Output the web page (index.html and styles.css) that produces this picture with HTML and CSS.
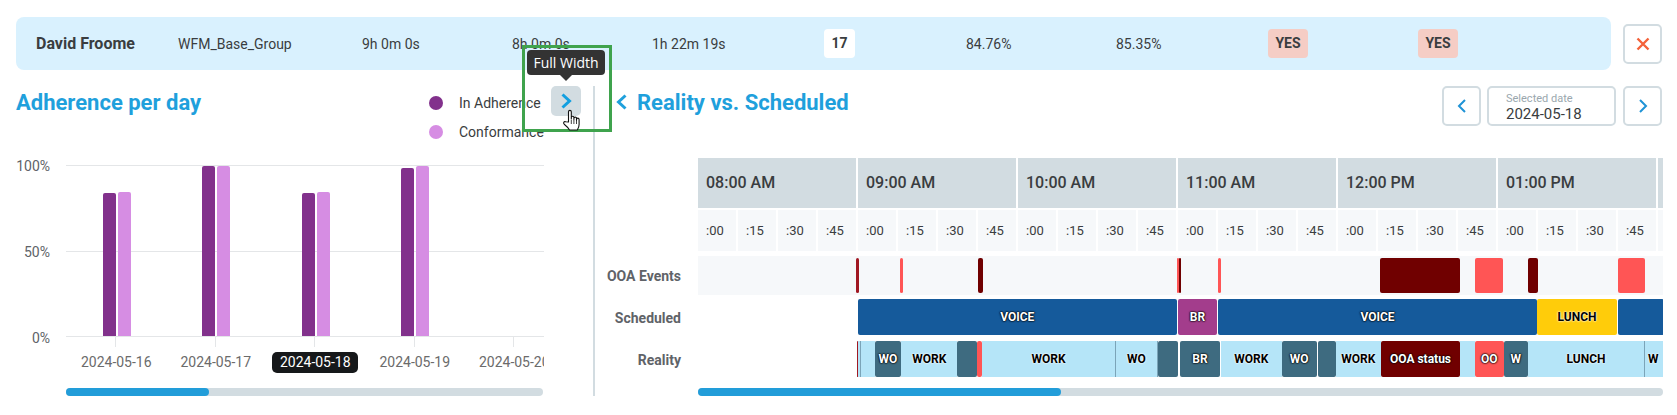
FILE: index.html
```html
<!DOCTYPE html>
<html lang="en">
<head>
  <meta charset="UTF-8">
  <meta name="viewport" content="width=device-width, initial-scale=1.0">
  <title>Adherence</title>
  <link rel="stylesheet" href="styles.css">
</head>
<body>
<div class="page">

  <!-- agent summary -->
  <div class="top-row">
    <div class="agent-bar">
      <div class="agent-name">David Froome</div>
      <div>WFM_Base_Group</div>
      <div>9h 0m 0s</div>
      <div>8h 0m 0s</div>
      <div>1h 22m 19s</div>
      <div><span class="badge badge-white">17</span></div>
      <div>84.76%</div>
      <div>85.35%</div>
      <div><span class="badge badge-red">YES</span></div>
      <div><span class="badge badge-red">YES</span></div>
    </div>
    <button class="icon-btn close-btn">
      <svg width="14" height="14" viewBox="0 0 14 14"><path d="M1.500 1.500l11 11M12.500 1.500l-11 11" stroke="#f4623a" stroke-width="2.400" fill="none"/></svg>
    </button>
  </div>

  <div class="panels">

    <!-- left: chart -->
    <div class="left-panel">
      <div class="left-head">
        <h2 class="title">Adherence per day</h2>
        <div class="legend">
          <div class="legend-row"><span class="dot dot-adh"></span>In Adherence</div>
          <div class="legend-row"><span class="dot dot-conf"></span>Conformance</div>
        </div>
        <button class="expand-btn">
          <svg width="13" height="16" viewBox="0 0 13 16"><path d="M2.500 1.500L9.500 8l-7 6.500" stroke="#129fe0" stroke-width="3" fill="none"/></svg>
        </button>
      </div>

      <div class="chart">
        <div class="y-axis">
          <span>100%</span>
          <span>50%</span>
          <span>0%</span>
        </div>
        <div class="plot-wrap">
          <div class="plot">
            <div class="bars">
              <div class="bar-group">
                <div class="bar bar-adh" style="height:84.3%"></div>
                <div class="bar bar-conf" style="height:84.9%"></div>
              </div>
              <div class="bar-group">
                <div class="bar bar-adh" style="height:100%"></div>
                <div class="bar bar-conf" style="height:100%"></div>
              </div>
              <div class="bar-group">
                <div class="bar bar-adh" style="height:84.3%"></div>
                <div class="bar bar-conf" style="height:84.9%"></div>
              </div>
              <div class="bar-group">
                <div class="bar bar-adh" style="height:98.8%"></div>
                <div class="bar bar-conf" style="height:100%"></div>
              </div>
              <div class="bar-group"></div>
            </div>
            <div class="x-labels">
              <div class="x-label"><span>2024-05-16</span></div>
              <div class="x-label"><span>2024-05-17</span></div>
              <div class="x-label"><span class="selected">2024-05-18</span></div>
              <div class="x-label"><span>2024-05-19</span></div>
              <div class="x-label"><span>2024-05-20</span></div>
            </div>
          </div>
          <div class="scroll scroll-left"><div class="thumb"></div></div>
        </div>
      </div>
    </div>

    <!-- right: timeline -->
    <div class="right-panel">
      <div class="right-head">
        <svg class="back-icon" width="11" height="16" viewBox="0 0 11 16"><path d="M9.500 1.500L2.500 8l7 6.500" stroke="#1fa0dc" stroke-width="3" fill="none"/></svg>
        <h2 class="title">Reality vs. Scheduled</h2>
        <div class="date-nav">
          <button class="icon-btn">
            <svg width="10" height="14" viewBox="0 0 10 14"><path d="M8 1L2 7l6 6" stroke="#1f93d6" stroke-width="2" fill="none"/></svg>
          </button>
          <div class="date-box">
            <div class="date-caption">Selected date</div>
            <div class="date-value">2024-05-18</div>
          </div>
          <button class="icon-btn">
            <svg width="10" height="14" viewBox="0 0 10 14"><path d="M2 1l6 6-6 6" stroke="#1f93d6" stroke-width="2" fill="none"/></svg>
          </button>
        </div>
      </div>

      <div class="timeline">
        <div class="row row-hours">
          <div class="row-label"></div>
          <div class="track hours">
            <div class="hour">08:00 AM</div>
            <div class="hour">09:00 AM</div>
            <div class="hour">10:00 AM</div>
            <div class="hour">11:00 AM</div>
            <div class="hour">12:00 PM</div>
            <div class="hour">01:00 PM</div>
            <div class="hour"></div>
          </div>
        </div>

        <div class="row row-mins">
          <div class="row-label"></div>
          <div class="track mins">
            <div>:00</div><div>:15</div><div>:30</div><div>:45</div>
            <div>:00</div><div>:15</div><div>:30</div><div>:45</div>
            <div>:00</div><div>:15</div><div>:30</div><div>:45</div>
            <div>:00</div><div>:15</div><div>:30</div><div>:45</div>
            <div>:00</div><div>:15</div><div>:30</div><div>:45</div>
            <div>:00</div><div>:15</div><div>:30</div><div>:45</div>
            <div></div>
          </div>
        </div>

        <div class="row row-ooa">
          <div class="row-label">OOA Events</div>
          <div class="track events">
            <div class="seg c-mid" style="left:158.4px;width:2.2px"></div>
            <div class="seg c-red" style="left:202.400px;width:3px"></div>
            <div class="seg c-ooa" style="left:279.5px;width:5px"></div>
            <div class="seg c-red" style="left:478.6px;width:2.4px"></div>
            <div class="seg c-ooa" style="left:480.6px;width:2.2px"></div>
            <div class="seg c-red" style="left:519.7px;width:3.8px"></div>
            <div class="seg c-ooa" style="left:682.4px;width:79.8px"></div>
            <div class="seg c-red" style="left:777.3px;width:28px"></div>
            <div class="seg c-ooa" style="left:830.4px;width:9.2px"></div>
            <div class="seg c-red" style="left:919.7px;width:27.8px"></div>
          </div>
        </div>

        <div class="row row-sched">
          <div class="row-label">Scheduled</div>
          <div class="track">
            <div class="seg c-voice" style="left:159.5px;width:319.5px">VOICE</div>
            <div class="seg c-br" style="left:479.7px;width:39.7px">BR</div>
            <div class="seg c-voice" style="left:520px;width:319px">VOICE</div>
            <div class="seg c-lunch" style="left:839px;width:80px">LUNCH</div>
            <div class="seg c-voice" style="left:919.7px;width:46px"></div>
          </div>
        </div>

        <div class="row row-real">
          <div class="row-label">Reality</div>
          <div class="track">
            <div class="seg c-mid" style="left:158.6px;width:1.6px"></div>
            <div class="seg c-work split" style="left:160.2px;width:2.6px"></div>
            <div class="seg c-work" style="left:162.8px;width:14px"></div>
            <div class="seg c-dark" style="left:176.7px;width:26.6px">WO</div>
            <div class="seg c-work" style="left:203.3px;width:56px">WORK</div>
            <div class="seg c-dark" style="left:259.3px;width:20px"></div>
            <div class="seg c-red" style="left:279.3px;width:4.7px"></div>
            <div class="seg c-work split" style="left:284px;width:134px">WORK</div>
            <div class="seg c-work split" style="left:418px;width:41.7px">WO</div>
            <div class="seg c-dark" style="left:459.7px;width:20.6px"></div>
            <div class="seg c-dark" style="left:481.7px;width:40.6px">BR</div>
            <div class="seg c-work" style="left:523px;width:60.7px">WORK</div>
            <div class="seg c-dark" style="left:583.7px;width:35px">WO</div>
            <div class="seg c-dark" style="left:620px;width:18px"></div>
            <div class="seg c-work" style="left:638px;width:44.7px">WORK</div>
            <div class="seg c-ooa" style="left:682.7px;width:79.6px">OOA status</div>
            <div class="seg c-work" style="left:762px;width:15px"></div>
            <div class="seg c-red" style="left:777px;width:28.7px">OO</div>
            <div class="seg c-dark" style="left:805.7px;width:24.3px">W</div>
            <div class="seg c-work split" style="left:830px;width:117px">LUNCH</div>
            <div class="seg c-work clip" style="left:947px;width:18px">W</div>
          </div>
        </div>

        <div class="row row-scroll">
          <div class="row-label"></div>
          <div class="scroll scroll-right"><div class="thumb"></div></div>
        </div>
      </div>
    </div>
  </div>

  <!-- annotation on top of the screenshot -->
  <div class="tooltip">Full Width</div>
  <div class="callout"></div>
  <svg class="hand" width="20" height="22" viewBox="0 0 20 22">
    <path d="M6.500 13V2.800a1.400 1.400 0 0 1 2.800 0V10V8.600a1.300 1.300 0 0 1 2.600 0V10.600V9.400a1.300 1.300 0 0 1 2.600 0V11.200V10.400a1.300 1.300 0 0 1 2.600 0V15.500c0 2.500-.8 4-1.800 5.500H7.500C6.400 19 4.200 16.800 2.200 15.200c-1.300-1.200-.3-3 1.500-2.400z" fill="#fff" stroke="#111" stroke-width="1.100" stroke-linejoin="round"/>
    <path d="M9.300 11v4M11.900 11v4M14.500 11v4" stroke="#111" stroke-width=".8"/>
  </svg>
</div>
</body>
</html>
```

FILE: styles.css
```css
* {
  box-sizing: border-box;
}

body {
  margin: 0;
  background: #fff;
  font-family: Roboto, "Liberation Sans", sans-serif;
  font-size: 14px;
  color: #3a3d40;
  overflow: hidden;
}

.page {
  position: relative;
  width: 1677px;
  height: 415px;
  padding: 17px 15px 0 16px;
}

h2 {
  margin: 0;
}

button {
  padding: 0;
  font: inherit;
  background: #fff;
  cursor: pointer;
}

/* top summary row */
.top-row {
  display: flex;
  align-items: center;
  justify-content: space-between;
  height: 53px;
  margin-bottom: 16px;
}

.agent-bar {
  display: grid;
  grid-template-columns: 142px 184px 150px 140px 172px 142px 150px 152px 150px 1fr;
  align-items: center;
  width: 1595px;
  height: 53px;
  padding-left: 20px;
  background: #d9f1fe;
  border-radius: 8px;
}

.agent-name {
  font-size: 16px;
  font-weight: 700;
}

.badge {
  display: inline-block;
  height: 29px;
  line-height: 29px;
  text-align: center;
  border-radius: 4px;
  font-weight: 700;
}

.badge-white {
  width: 31px;
  background: #fff;
}

.badge-red {
  width: 40px;
  background: #f5cdc5;
}

.icon-btn {
  display: flex;
  align-items: center;
  justify-content: center;
  width: 39px;
  height: 40px;
  border: 2px solid #d2dce1;
  border-radius: 5px;
}

/* panels */
.panels {
  display: flex;
}

.title {
  padding-top: 1px;
  font-size: 22px;
  font-weight: 700;
  line-height: 32px;
  color: #1fa0dc;
}

.left-panel {
  width: 579px;
  height: 310px;
  padding-right: 12px;
  border-right: 2px solid #d2dce1;
}

.left-head {
  display: flex;
  height: 56px;
}

.legend {
  margin-left: auto;
  width: 122px;
  padding-top: 7px;
}

.legend-row {
  display: flex;
  align-items: center;
  gap: 16px;
  height: 20px;
  margin-bottom: 9px;
  white-space: nowrap;
}

.dot {
  width: 14px;
  height: 14px;
  border-radius: 50%;
}

.dot-adh,
.bar-adh {
  background: #82318c;
}

.dot-conf,
.bar-conf {
  background: #d68de3;
}

.expand-btn {
  display: flex;
  align-items: center;
  justify-content: center;
  width: 30px;
  height: 30px;
  border: none;
  border-radius: 5px;
  background: #d2dce1;
}

/* bar chart */
.chart {
  display: flex;
  margin-top: 16px;
}

.y-axis {
  display: flex;
  flex-direction: column;
  justify-content: space-between;
  align-items: flex-end;
  width: 34px;
  height: 188px;
  margin-right: 16px;
  line-height: 16px;
  color: #5e6368;
}

.plot-wrap {
  width: 478px;
  padding-top: 7px;
}

.plot {
  overflow: hidden;
}

.bars {
  display: flex;
  height: 172px;
  border-top: 1px solid #e4e6e8;
  border-bottom: 1px solid #e4e6e8;
  background: linear-gradient(#e4e6e8, #e4e6e8) 0 85px / 100% 1px no-repeat;
}

.bar-group {
  display: flex;
  flex: 0 0 99.5px;
  align-items: flex-end;
  justify-content: center;
  gap: 2px;
  padding-left: 2px;
}

.bar {
  width: 13px;
  border-radius: 2px 2px 0 0;
}

.x-labels {
  display: flex;
  height: 37px;
  padding-top: 15px;
}

.x-label {
  flex: 0 0 99.5px;
  margin-top: -15px;
  padding: 15px 0 0 1px;
  text-align: center;
  white-space: nowrap;
  line-height: 21px;
  color: #6b6b6b;
  background: linear-gradient(#e4e6e8, #e4e6e8) center top / 1px 10px no-repeat;
}

.x-label span {
  display: inline-block;
  padding: 0 7.5px;
}

.x-label .selected {
  background: #16181a;
  color: #fff;
  border-radius: 5px;
}

.scroll {
  height: 8px;
  background: #d2dce1;
  border-radius: 4px;
}

.thumb {
  height: 8px;
  background: #229dd9;
  border-radius: 4px;
}

.scroll-left {
  width: 477px;
  margin-top: 14px;
}

.scroll-left .thumb {
  width: 143px;
}

/* timeline */
.right-panel {
  flex: 1;
  min-width: 0;
}

.right-head {
  display: flex;
  align-items: flex-start;
  height: 40px;
  padding-left: 21px;
}

.back-icon {
  margin: 8px 10px 0 0;
}

.date-nav {
  display: flex;
  gap: 6px;
  margin-left: auto;
}

.date-box {
  width: 129px;
  height: 40px;
  margin-right: 1px;
  padding: 4px 0 0 17px;
  border: 2px solid #d2dce1;
  border-radius: 5px;
}

.date-caption {
  font-size: 11px;
  line-height: 13px;
  color: #9aa7ae;
}

.date-value {
  font-size: 15px;
  line-height: 18px;
}

.timeline {
  margin-top: 32px;
  margin-right: -1px;
}

.row {
  display: flex;
}

.row-label {
  flex: 0 0 86px;
  margin-right: 17px;
  text-align: right;
  font-weight: 700;
  color: #5f6368;
}

.track {
  position: relative;
  width: 965px;
  height: 100%;
  overflow: hidden;
}

.row-hours {
  height: 50px;
  margin-bottom: 2px;
}

.hours {
  display: flex;
  gap: 2px;
}

.hour {
  flex: 0 0 158px;
  padding-left: 8px;
  line-height: 50px;
  font-size: 16px;
  font-weight: 500;
  background: #d2dce1;
}

.row-mins {
  height: 41px;
  margin-bottom: 5px;
}

.mins {
  display: flex;
  gap: 2px;
}

.mins div {
  flex: 0 0 38px;
  padding-left: 8px;
  line-height: 41px;
  font-size: 13px;
  background: #f6f8fa;
}

.row-ooa {
  height: 39px;
  margin-bottom: 4px;
  line-height: 40px;
}

.events {
  background: #f6f8fa;
}

.events .seg {
  top: 2px;
  bottom: 2px;
}

.row-sched {
  height: 36px;
  margin-bottom: 6px;
  line-height: 38px;
}

.row-real {
  height: 36px;
  margin-bottom: 11px;
  line-height: 38px;
}

.seg {
  position: absolute;
  top: 0;
  bottom: 0;
  overflow: hidden;
  text-align: center;
  white-space: nowrap;
  font-size: 12px;
  font-weight: 700;
  line-height: 37px;
  border-radius: 2px;
}

.split {
  border-right: 1px solid #7ba4b8;
  border-radius: 0;
}

.clip {
  text-align: left;
  padding-left: 3px;
  border-radius: 0;
}

.c-voice,
.c-br,
.c-dark,
.c-ooa,
.c-red {
  color: #fff;
  text-shadow: 0 0 2px #000, 0 0 2px #000, 0 0 1px #000;
}

.c-lunch,
.c-work {
  color: #000;
  text-shadow: 0 0 2px #fff, 0 0 2px #fff;
}

.c-voice { background: #155a9b; }
.c-br { background: #a33d8c; }
.c-lunch { background: #ffcc0a; }
.c-work { background: #b5e5f8; border-radius: 0; }
.c-dark { background: #3e6b80; }
.c-ooa { background: #700000; }
.c-mid { background: #a01822; }
.c-red { background: #ff5555; }

.row-scroll {
  height: 8px;
}

.scroll-right {
  width: 965px;
}

.scroll-right .thumb {
  width: 363px;
}

/* annotation layer */
.tooltip {
  position: absolute;
  left: 527px;
  top: 50px;
  width: 78px;
  height: 25px;
  line-height: 25px;
  text-align: center;
  font-family: "Open Sans", sans-serif;
  font-size: 14px;
  color: #fff;
  background: #333;
  border-radius: 4px;
}

.tooltip::after {
  content: "";
  position: absolute;
  left: 33px;
  top: 25px;
  border: 6px solid transparent;
  border-top-color: #333;
  border-bottom: none;
}

.callout {
  position: absolute;
  left: 522px;
  top: 45px;
  width: 90px;
  height: 87px;
  border: 3px solid #3fa34d;
}

.hand {
  position: absolute;
  left: 562px;
  top: 109px;
}
```
